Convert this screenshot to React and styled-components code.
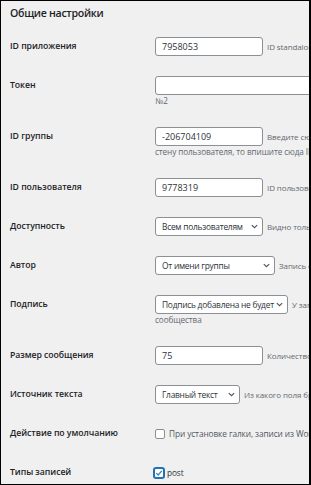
import React from "react";
import styled, { createGlobalStyle } from "styled-components";

const Global = createGlobalStyle`
  html, body { margin: 0; padding: 0; background: #fff; }
`;

const Frame = styled.div`
  width: 311px;
  height: 485px;
  box-sizing: border-box;
  border: 1px solid #000;
  border-right-width: 2px;
  background: #f0f0f1;
  overflow: hidden;
  font-family: "Open Sans", "Noto Sans", sans-serif;
  color: #1d2327;
`;

const Heading = styled.h2`
  margin: 0;
  box-sizing: border-box;
  height: 26px;
  padding: 5px 9px 0;
  font-size: 10.6px;
  line-height: 14px;
  font-weight: 600;
  letter-spacing: -0.3px;
  color: #1d2327;
`;

const Table = styled.div`
  padding-left: 9px;
`;

const Row = styled.div`
  display: grid;
  grid-template-columns: 145px 1fr;
  padding: 10px 0;
  align-items: start;
`;

const Label = styled.div`
  font-size: 8.7px;
  font-weight: 600;
  line-height: 19px;
  white-space: nowrap;
  letter-spacing: -0.05px;
`;

const Cell = styled.div`
  display: flex;
  flex-direction: column;
  min-width: 0;
`;

const Field = styled.div`
  display: flex;
  align-items: center;
  gap: 4px;
  white-space: nowrap;
  height: 19px;
`;

const Input = styled.div`
  flex: none;
  width: ${(p) => p.$w}px;
  height: 19px;
  box-sizing: border-box;
  border: 1px solid #8c8f94;
  border-radius: 3px;
  background: #fff;
  padding: 0 6px;
  font-size: 9px;
  line-height: 17px;
  color: #2c3338;
`;

const Select = styled.div`
  flex: none;
  width: ${(p) => p.$w}px;
  height: 19px;
  box-sizing: border-box;
  border: 1px solid #8c8f94;
  border-radius: 3px;
  background: #fff;
  padding: 0 4px 0 6px;
  display: flex;
  align-items: center;
  justify-content: space-between;
  gap: 2px;
  font-size: 8.4px;
  letter-spacing: -0.25px;
  color: #2c3338;
`;

const Desc = styled.span`
  font-size: 8px;
  letter-spacing: -0.1px;
  color: #646970;
`;

const Note = styled.div`
  font-size: 8.2px;
  letter-spacing: -0.1px;
  line-height: 12px;
  color: #646970;
  white-space: nowrap;
`;

const Check = styled.span`
  flex: none;
  width: 10px;
  height: 10px;
  box-sizing: border-box;
  border: 1px solid ${(p) => (p.$on ? "#2271b1" : "#8c8f94")};
  box-shadow: ${(p) => (p.$on ? "0 0 0 1px #2271b1" : "none")};
  border-radius: 2px;
  background: #fff;
  margin-left: ${(p) => (p.$on ? "-1px" : "0")};
  display: flex;
  align-items: center;
  justify-content: center;
`;

const CheckText = styled.span`
  font-size: 8.3px;
  letter-spacing: -0.1px;
  color: ${(p) => (p.$dark ? "#2c3338" : "#50575e")};
  margin-left: ${(p) => (p.$tight ? "-1px" : "0")};
`;

const Chevron = () => (
  <svg width="7" height="5" viewBox="0 0 7 5" fill="none" style={{ flex: "none" }}>
    <path d="M0.8 1.1 L3.5 3.7 L6.2 1.1" stroke="#50575e" strokeWidth="1.2" />
  </svg>
);

const Tick = () => (
  <svg width="8" height="8" viewBox="0 0 8 8" fill="none">
    <path d="M1.3 4.1 L3.2 6 L6.8 1.8" stroke="#3582c4" strokeWidth="1.3" />
  </svg>
);

export default function App() {
  return (
    <>
      <Global />
      <Frame>
        <Heading>Общие настройки</Heading>
        <Table>
          <Row>
            <Label>ID приложения</Label>
            <Cell>
              <Field>
                <Input $w={108}>7958053</Input>
                <Desc>ID standalone-приложения ВКонтакте</Desc>
              </Field>
            </Cell>
          </Row>
          <Row>
            <Label>Токен</Label>
            <Cell>
              <Field>
                <Input $w={220} />
              </Field>
              <Note>№2</Note>
            </Cell>
          </Row>
          <Row>
            <Label>ID группы</Label>
            <Cell>
              <Field>
                <Input $w={108}>-206704109</Input>
                <Desc>Введите сюда ID группы. Если публикуете на</Desc>
              </Field>
              <Note>стену пользователя, то впишите сюда ID пользователя</Note>
            </Cell>
          </Row>
          <Row>
            <Label>ID пользователя</Label>
            <Cell>
              <Field>
                <Input $w={108}>9778319</Input>
                <Desc>ID пользователя ВКонтакте</Desc>
              </Field>
            </Cell>
          </Row>
          <Row>
            <Label>Доступность</Label>
            <Cell>
              <Field>
                <Select $w={108}>
                  Всем пользователям
                  <Chevron />
                </Select>
                <Desc>Видно только друзьям</Desc>
              </Field>
            </Cell>
          </Row>
          <Row>
            <Label>Автор</Label>
            <Cell>
              <Field>
                <Select $w={120}>
                  От имени группы
                  <Chevron />
                </Select>
                <Desc>Запись от имени группы</Desc>
              </Field>
            </Cell>
          </Row>
          <Row>
            <Label>Подпись</Label>
            <Cell>
              <Field>
                <Select $w={133}>
                  Подпись добавлена не будет
                  <Chevron />
                </Select>
                <Desc>У записи будет подпись</Desc>
              </Field>
              <Note>сообщества</Note>
            </Cell>
          </Row>
          <Row>
            <Label>Размер сообщения</Label>
            <Cell>
              <Field>
                <Input $w={108}>75</Input>
                <Desc>Количество слов в сообщении</Desc>
              </Field>
            </Cell>
          </Row>
          <Row>
            <Label>Источник текста</Label>
            <Cell>
              <Field>
                <Select $w={85}>
                  Главный текст
                  <Chevron />
                </Select>
                <Desc>Из какого поля брать текст</Desc>
              </Field>
            </Cell>
          </Row>
          <Row>
            <Label>Действие по умолчанию</Label>
            <Cell>
              <Field>
                <Check />
                <CheckText>При установке галки, записи из WordPress</CheckText>
              </Field>
            </Cell>
          </Row>
          <Row>
            <Label>Типы записей</Label>
            <Cell>
              <Field>
                <Check $on>
                  <Tick />
                </Check>
                <CheckText $dark $tight>post</CheckText>
              </Field>
            </Cell>
          </Row>
        </Table>
      </Frame>
    </>
  );
}
